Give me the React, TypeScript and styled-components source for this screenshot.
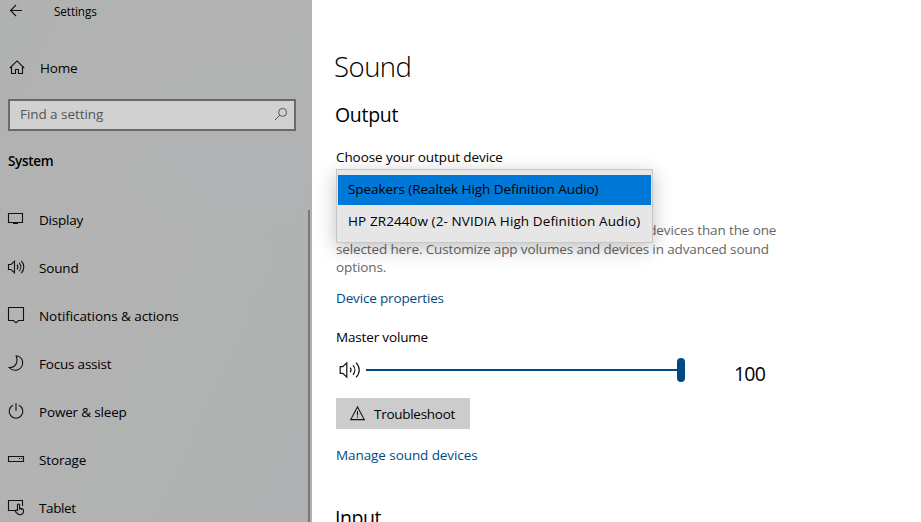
import React from "react";
import styled, { createGlobalStyle } from "styled-components";

const GlobalStyle = createGlobalStyle`
  * { box-sizing: border-box; }
  html, body { margin: 0; height: 100%; overflow: hidden; background: #fff; }
  body {
    font-family: "Open Sans", "Noto Sans", sans-serif;
    font-size: 13.5px;
    line-height: 20px;
    color: #000;
  }
  svg { display: block; flex: none; overflow: visible; }
`;

const Label = styled.span<{ $track?: number }>`
  letter-spacing: ${(p) => p.$track ?? 0}px;
  white-space: nowrap;
`;

const Window = styled.div`
  display: grid;
  grid-template-columns: 312px 1fr;
  height: 522px;
  overflow: hidden;
`;

const Sidebar = styled.aside`
  position: relative;
  display: flex;
  flex-direction: column;
  overflow: hidden;
  background:
    radial-gradient(ellipse 190px 110px at 270px 150px, rgba(174, 178, 184, 0.4), transparent),
    linear-gradient(115deg, #b0b1b1 0%, #b3b3b3 35%, #b1b2b2 65%, #afb0b1 100%);
`;

const TitleBar = styled.header`
  display: flex;
  align-items: center;
  gap: 30px;
  height: 22px;
  padding-left: 8px;
  font-size: 11.7px;
`;

const HomeLink = styled.a`
  display: flex;
  align-items: center;
  gap: 15px;
  height: 24px;
  margin-top: 34px;
  padding-left: 8px;
`;

const SearchBox = styled.div`
  display: flex;
  align-items: center;
  justify-content: space-between;
  width: 288px;
  height: 32px;
  margin: 19px 0 0 8px;
  padding: 0 6px 2px 10px;
  border: 2px solid #6a6a6b;
  background: #d1d1d1;
  color: #555;
`;

const Category = styled.h2`
  margin: 20px 0 0 8px;
  font-size: 13.5px;
  line-height: 20px;
  font-weight: 600;
`;

const Nav = styled.nav`
  display: flex;
  flex-direction: column;
  margin-top: 25px;
`;

const NavItem = styled.a`
  display: flex;
  align-items: center;
  flex: none;
  gap: 15px;
  height: 48px;
  padding-left: 8px;
`;

const ScrollThumb = styled.div`
  position: absolute;
  top: 210px;
  bottom: 0;
  right: 2px;
  width: 2px;
  background: #777;
`;

const Content = styled.main`
  display: flex;
  flex-direction: column;
  align-items: flex-start;
  padding: 47px 0 0 24px;
`;

const PageTitle = styled.h1`
  margin: 0 0 0 -2px;
  font-size: 27.5px;
  line-height: 40px;
  font-weight: 300;
`;

const SectionTitle = styled.h2<{ $gap: number }>`
  margin: ${(p) => p.$gap}px 0 0 -1px;
  font-size: 19.5px;
  line-height: 28px;
  font-weight: 400;
`;

const FieldLabel = styled.div<{ $gap: number }>`
  margin-top: ${(p) => p.$gap}px;
  height: 20px;
`;

const Picker = styled.div`
  position: relative;
  width: 317px;
  height: 54px;
`;

const Menu = styled.ul`
  position: absolute;
  z-index: 1;
  top: 2px;
  left: 0;
  width: 317px;
  height: 74px;
  margin: 0;
  padding: 5px 1px;
  list-style: none;
  border: 1px solid #c6c6c6;
  background: #e6e6e6;
  box-shadow: 0 5px 18px rgba(0, 0, 0, 0.25);
`;

const Option = styled.li<{ $selected?: boolean }>`
  display: flex;
  align-items: center;
  height: 30px;
  margin-bottom: 2px;
  padding: 0 0 2px 10px;
  background: ${(p) => (p.$selected ? "#0078d7" : "transparent")};
`;

const Hint = styled.p`
  display: flex;
  flex-direction: column;
  margin: 0;
  line-height: 18.6px;
  color: #666;
`;

const Link = styled.a<{ $gap: number }>`
  margin-top: ${(p) => p.$gap}px;
  color: #004a83;
`;

const VolumeRow = styled.div`
  display: flex;
  align-items: center;
  height: 30px;
  margin-top: 8px;
  padding-left: 3px;
`;

const Slider = styled.div`
  display: flex;
  align-items: center;
  width: 319px;
  margin-left: 5px;
`;

const Track = styled.div`
  flex: 1;
  height: 2px;
  background: #004a83;
`;

const Thumb = styled.div`
  width: 8px;
  height: 24px;
  border-radius: 4px;
  background: #004a83;
`;

const VolumeValue = styled.output`
  margin: 8px 0 0 49px;
  font-size: 19.5px;
  line-height: 28px;
`;

const Button = styled.button`
  display: flex;
  align-items: center;
  gap: 9px;
  width: 134px;
  height: 31px;
  margin-top: 13px;
  padding: 1px 0 0 14px;
  border: 0;
  background: #ccc;
  color: #000;
  font: inherit;
`;

const Icon = ({ w = 16, h = 16, children }: { w?: number; h?: number; children: React.ReactNode }) => (
  <svg width={w} height={h} viewBox={`0 0 ${w} ${h}`} fill="none" stroke="#111" strokeWidth="1.1">
    {children}
  </svg>
);

const BackIcon = () => (
  <Icon>
    <path d="M14 7.5H2.5M8 2L2.5 7.5L8 13" />
  </Icon>
);
const HomeIcon = () => (
  <Icon w={17}>
    <path d="M1.8 8L9 .9L16.2 8M3.5 6.5V13.5H7.5V9.5H10.5V13.5H14.5V6.5" />
  </Icon>
);
const SearchIcon = () => (
  <svg width="14" height="14" viewBox="0 0 14 14" fill="none" stroke="#555" strokeWidth="1">
    <circle cx="8.6" cy="5.4" r="4" />
    <path d="M5.7 8.3L1 13" />
  </svg>
);
const DisplayIcon = () => (
  <Icon>
    <path d="M.5 1.5H14.5V10.5H.5ZM7.5 10.5V11.5M5 11.5H10" />
  </Icon>
);
const SoundIcon = () => (
  <Icon>
    <path d="M.5 4.5H3L6.5 1.2V12.8L3 9.5H.5ZM9 4.7C10.1 6 10.1 8 9 9.3M11.2 2.8C13.3 5.2 13.3 8.8 11.2 11.2M13.3 .8C16.6 4.3 16.6 9.7 13.3 13.2" />
  </Icon>
);
const NotificationIcon = () => (
  <Icon>
    <path d="M.5 -.5H15.5V12.5H10.5L8 14.8L5.5 12.5H.5Z" />
  </Icon>
);
const MoonIcon = () => (
  <Icon>
    <path d="M8.2 -.3C13 .2 15.2 4 14.6 8C13.5 14.2 5.5 16.5 1 11.5C7 12 10.7 6.5 8.2 -.3Z" />
  </Icon>
);
const PowerIcon = () => (
  <Icon>
    <path d="M5 1.3A6.8 6.8 0 1 0 11 1.3" />
    <path d="M8 -.8V6.8" stroke="#444" strokeWidth="1.6" />
  </Icon>
);
const StorageIcon = () => (
  <Icon>
    <path d="M.5 4.5H15.5V9.5H.5Z" />
    <path d="M10.8 6.5H12M13.2 6.5H14.2" />
  </Icon>
);
const TabletIcon = () => (
  <Icon>
    <path d="M7.5 10.5H.5V.5H14.5V6" />
    <path d="M9.5 10.8V5C9.5 3.6 11.6 3.6 11.6 5V8L14.5 8.7Q15.6 9.1 15.5 10.5C15.5 13.2 14.3 14.7 12 14.7C9.8 14.7 9 13.4 7.3 11.4C6.8 10.1 8.3 9.6 9.5 10.8M11.6 8V9.8M13.4 8.5V10" />
  </Icon>
);
const VolumeIcon = () => (
  <svg width="22" height="18" viewBox="0 0 22 18" fill="none" stroke="#111" strokeWidth="1.2">
    <path d="M1.2 5.6H3.8L7.8 1.8V16.2L3.8 12.4H1.2ZM11.2 6.6C12.2 8 12.2 10 11.2 11.4M14 4.2C16.4 7 16.4 11 14 13.8M17 1.6C21.3 6 21.3 12 17 16.4" />
  </svg>
);
const WarningIcon = () => (
  <Icon w={15} h={15}>
    <path d="M7.5 .9L14.3 13.6H.7ZM7.5 5V9.6M7.5 10.6V11.8" />
  </Icon>
);

const navItems = [
  { text: "Display", track: -0.2, Glyph: DisplayIcon },
  { text: "Sound", track: -0.15, Glyph: SoundIcon },
  { text: "Notifications & actions", track: -0.07, Glyph: NotificationIcon },
  { text: "Focus assist", track: -0.2, Glyph: MoonIcon },
  { text: "Power & sleep", track: -0.17, Glyph: PowerIcon },
  { text: "Storage", track: -0.15, Glyph: StorageIcon },
  { text: "Tablet", track: -0.4, Glyph: TabletIcon },
];

export default function App() {
  return (
    <>
      <GlobalStyle />
      <Window>
        <Sidebar>
          <TitleBar>
            <BackIcon />
            <Label $track={-0.08}>Settings</Label>
          </TitleBar>
          <HomeLink>
            <HomeIcon />
            <Label $track={-0.2}>Home</Label>
          </HomeLink>
          <SearchBox>
            <Label $track={-0.06}>Find a setting</Label>
            <SearchIcon />
          </SearchBox>
          <Category>
            <Label $track={-0.3}>System</Label>
          </Category>
          <Nav>
            {navItems.map(({ text, track, Glyph }) => (
              <NavItem key={text}>
                <Glyph />
                <Label $track={track}>{text}</Label>
              </NavItem>
            ))}
          </Nav>
          <ScrollThumb />
        </Sidebar>
        <Content>
          <PageTitle>
            <Label $track={-0.5}>Sound</Label>
          </PageTitle>
          <SectionTitle $gap={14}>
            <Label $track={-0.3}>Output</Label>
          </SectionTitle>
          <FieldLabel $gap={18}>
            <Label $track={-0.08}>Choose your output device</Label>
          </FieldLabel>
          <Picker>
            <Menu>
              <Option $selected>
                <Label $track={-0.06}>Speakers (Realtek High Definition Audio)</Label>
              </Option>
              <Option>
                <Label $track={0.1}>HP ZR2440w (2- NVIDIA High Definition Audio)</Label>
              </Option>
            </Menu>
          </Picker>
          <Hint>
            <Label $track={-0.12}>Certain apps may be set up to use different sound devices than the one</Label>
            <Label $track={-0.13}>selected here. Customize app volumes and devices in advanced sound</Label>
            <Label $track={-0.08}>options.</Label>
          </Hint>
          <Link $gap={11}>
            <Label $track={-0.16}>Device properties</Label>
          </Link>
          <FieldLabel $gap={19}>
            <Label $track={-0.16}>Master volume</Label>
          </FieldLabel>
          <VolumeRow>
            <VolumeIcon />
            <Slider>
              <Track />
              <Thumb />
            </Slider>
            <VolumeValue>
              <Label $track={-0.8}>100</Label>
            </VolumeValue>
          </VolumeRow>
          <Button>
            <WarningIcon />
            <Label $track={-0.28}>Troubleshoot</Label>
          </Button>
          <Link $gap={16}>
            <Label $track={-0.08}>Manage sound devices</Label>
          </Link>
          <SectionTitle $gap={39}>
            <Label $track={-0.45}>Input</Label>
          </SectionTitle>
        </Content>
      </Window>
    </>
  );
}
